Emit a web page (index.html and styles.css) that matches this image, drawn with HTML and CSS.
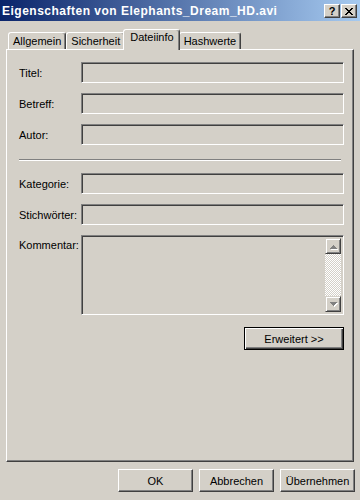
FILE: index.html
```html
<!DOCTYPE html>
<html lang="de">
<head>
  <meta charset="UTF-8">
  <title>Eigenschaften von Elephants_Dream_HD.avi</title>
  <link rel="stylesheet" href="styles.css">
</head>
<body>
  <div class="dialog">
    <div class="titlebar">
      <span class="title">Eigenschaften von Elephants_Dream_HD.avi</span>
      <div class="caption-buttons">
        <button class="cap-btn">?</button>
        <button class="cap-btn">
          <svg width="8" height="7" viewBox="0 0 8 7" shape-rendering="crispEdges">
            <path d="M0 0h2v1h-2zM6 0h2v1h-2zM1 1h2v1h-2zM5 1h2v1h-2zM2 2h4v1h-4zM3 3h2v1h-2zM2 4h4v1h-4zM1 5h2v1h-2zM5 5h2v1h-2zM0 6h2v1h-2zM6 6h2v1h-2z" fill="#000"/>
          </svg>
        </button>
      </div>
    </div>

    <div class="tabs">
      <div class="tab">Allgemein</div>
      <div class="tab">Sicherheit</div>
      <div class="tab active">Dateiinfo</div>
      <div class="tab">Hashwerte</div>
    </div>

    <div class="panel">
      <div class="fields">
        <label class="field-label" for="titel">Titel:</label>
        <input class="field" id="titel" type="text" readonly>
        <label class="field-label" for="betreff">Betreff:</label>
        <input class="field" id="betreff" type="text" readonly>
        <label class="field-label" for="autor">Autor:</label>
        <input class="field" id="autor" type="text" readonly>
      </div>

      <div class="separator"></div>

      <div class="fields">
        <label class="field-label" for="kategorie">Kategorie:</label>
        <input class="field" id="kategorie" type="text" readonly>
        <label class="field-label" for="stichwoerter">Stichwörter:</label>
        <input class="field" id="stichwoerter" type="text" readonly>
        <label class="field-label top">Kommentar:</label>
        <div class="memo">
          <div class="scrollbar">
            <div class="scroll-btn">
              <svg width="14" height="14" viewBox="0 0 14 14" shape-rendering="crispEdges">
                <path d="M7 6h1v1h-1zM6 7h3v1h-3zM5 8h5v1h-5zM4 9h7v1h-7z" fill="#fff" transform="translate(1 1)"/>
                <path d="M7 6h1v1h-1zM6 7h3v1h-3zM5 8h5v1h-5zM4 9h7v1h-7z" fill="#808080"/>
              </svg>
            </div>
            <div class="scroll-track"></div>
            <div class="scroll-btn">
              <svg width="14" height="14" viewBox="0 0 14 14" shape-rendering="crispEdges">
                <path d="M4 5h7v1h-7zM5 6h5v1h-5zM6 7h3v1h-3zM7 8h1v1h-1z" fill="#fff" transform="translate(1 1)"/>
                <path d="M4 5h7v1h-7zM5 6h5v1h-5zM6 7h3v1h-3zM7 8h1v1h-1z" fill="#808080"/>
              </svg>
            </div>
          </div>
        </div>
      </div>

      <div class="advanced-row">
        <button class="btn default">Erweitert &gt;&gt;</button>
      </div>
    </div>

    <div class="footer">
      <button class="btn">OK</button>
      <button class="btn">Abbrechen</button>
      <button class="btn">Übernehmen</button>
    </div>
  </div>
</body>
</html>
```

FILE: styles.css
```css
* {
  box-sizing: border-box;
}

body {
  margin: 0;
  background-color: #d4d0c8;
  font-family: "Liberation Sans", Arial, sans-serif;
  font-size: 11px;
  color: #000;
}

.dialog {
  width: 360px;
  height: 500px;
  display: flex;
  flex-direction: column;
  overflow: hidden;
}

/* title bar */
.titlebar {
  height: 21px;
  flex: none;
  display: flex;
  align-items: center;
  justify-content: space-between;
  padding: 0 3px 0 2px;
  background: linear-gradient(to right, #0a246a, #a6caf0);
  color: #fff;
}

.title {
  font-weight: bold;
  font-size: 12px;
  letter-spacing: 0.5px;
}

.caption-buttons {
  display: flex;
  gap: 1px;
  margin-top: 1px;
}

.cap-btn {
  width: 16px;
  height: 14px;
  padding: 0;
  display: flex;
  align-items: center;
  justify-content: center;
  background-color: #d4d0c8;
  border: 1px solid;
  border-color: #fff #404040 #404040 #fff;
  box-shadow: inset -1px -1px #808080;
  font-family: "Liberation Sans", Arial, sans-serif;
  font-weight: bold;
  font-size: 11px;
  line-height: 1;
  color: #000;
}

/* tabs */
.tabs {
  height: 20px;
  margin-top: 8px;
  padding-left: 8px;
  display: flex;
  align-items: flex-end;
  flex: none;
}

.tab {
  height: 17px;
  padding: 2px 4px 0 4px;
  border: 1px solid;
  border-bottom: none;
  border-color: #fff #404040 transparent #fff;
  border-radius: 3px 3px 0 0;
  box-shadow: inset -1px 0 #808080;
  background-color: #d4d0c8;
}

.tab.active {
  position: relative;
  z-index: 1;
  height: 21px;
  margin: 0 -1px -1px -2px;
  padding: 1px 5px 0 6px;
}

/* page */
.panel {
  height: 413px;
  margin: 0 6px;
  flex: none;
  padding: 12px 9px 0 12px;
  border: 1px solid;
  border-color: #fff #404040 #404040 #fff;
  box-shadow: inset -1px -1px #808080;
}

.fields {
  display: grid;
  grid-template-columns: 62px 1fr;
  row-gap: 10px;
  align-items: center;
}

.field-label {
  white-space: nowrap;
}

.field-label.top {
  align-self: start;
  padding-top: 4px;
}

.field {
  height: 21px;
  width: 100%;
  margin: 0;
  padding: 0 3px;
  border: 1px solid;
  border-color: #808080 #fff #fff #808080;
  box-shadow: inset 1px 1px #404040, inset -1px -1px #d4d0c8;
  background-color: #d4d0c8;
  font: inherit;
  outline: none;
}

.separator {
  height: 2px;
  margin: 14px 3px 12px 0;
  border-top: 1px solid #808080;
  border-bottom: 1px solid #fff;
}

.memo {
  height: 80px;
  display: flex;
  justify-content: flex-end;
  padding: 2px;
  border: 1px solid;
  border-color: #808080 #fff #fff #808080;
  box-shadow: inset 1px 1px #404040, inset -1px -1px #d4d0c8;
}

.scrollbar {
  width: 16px;
  display: flex;
  flex-direction: column;
}

.scroll-btn {
  width: 16px;
  height: 16px;
  flex: none;
  border: 1px solid;
  border-color: #d4d0c8 #404040 #404040 #d4d0c8;
  box-shadow: inset 1px 1px #fff, inset -1px -1px #808080;
  background-color: #d4d0c8;
}

.scroll-btn svg {
  display: block;
}

.scroll-track {
  flex: 1;
  background: repeating-conic-gradient(#fff 0 25%, #d4d0c8 0 50%) 0 0 / 2px 2px;
}

.advanced-row {
  display: flex;
  justify-content: flex-end;
  margin-top: 12px;
}

/* buttons */
.btn {
  width: 75px;
  height: 23px;
  padding: 0;
  background-color: #d4d0c8;
  border: 1px solid;
  border-color: #fff #404040 #404040 #fff;
  box-shadow: inset -1px -1px #808080;
  font-family: "Liberation Sans", Arial, sans-serif;
  font-size: 11px;
  color: #000;
}

.btn.default {
  width: 100px;
  border-color: #000;
  box-shadow: inset 1px 1px #fff, inset -1px -1px #404040, inset -2px -2px #808080;
}

.footer {
  display: flex;
  justify-content: flex-end;
  gap: 6px;
  padding: 7px 5px 0 0;
}
```
